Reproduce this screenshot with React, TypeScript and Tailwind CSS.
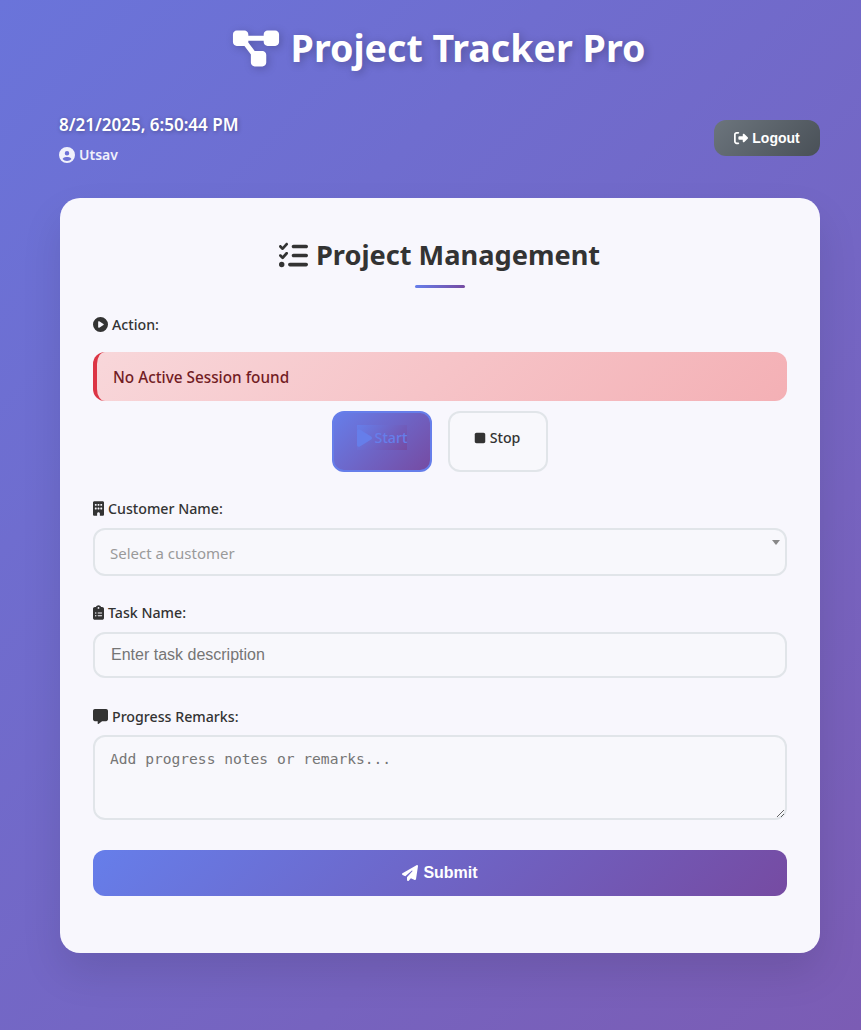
import React from 'react';
import {
  FaDiagramProject,
  FaCircleUser,
  FaRightFromBracket,
  FaListCheck,
  FaCirclePlay,
  FaPlay,
  FaStop,
  FaBuilding,
  FaClipboardList,
  FaMessage,
  FaPaperPlane,
} from 'react-icons/fa6';

const uiFont = "font-['Noto_Sans','Open_Sans',sans-serif]";

function FieldLabel({ icon, text }: { icon: React.ReactNode; text: string }) {
  return (
    <div className="flex h-[20px] items-center gap-[4px] text-[14.2px] font-medium text-[#333333]">
      {icon}
      <span className="pt-[1px]">{text}</span>
    </div>
  );
}

export default function App() {
  return (
    <div className={`${uiFont} min-h-[1030px] bg-[linear-gradient(135deg,#6a74da_0%,#7b5cb4_100%)] pt-[20px] pr-[41px] pl-[60px]`}>
      {/* header */}
      <h1 className="flex h-[56px] items-center justify-center gap-[10px] pr-[4px] text-[37.6px] font-bold text-white [text-shadow:2px_2px_8px_rgba(0,0,0,0.25)]">
        <FaDiagramProject className="h-[41px] w-[50px] drop-shadow-[2px_2px_4px_rgba(0,0,0,0.2)]" />
        <span>Project Tracker Pro</span>
      </h1>

      <div className="mt-[26px] flex h-[72px] items-center justify-between">
        <div className="-ml-[1px] text-white">
          <div className="text-[17px] leading-[26px] font-semibold [text-shadow:1px_1px_4px_rgba(0,0,0,0.3)]">
            8/21/2025, 6:50:44 PM
          </div>
          <div className="mt-[7px] flex items-center gap-[4px] text-[14px] leading-[20px] font-semibold text-white/90">
            <FaCircleUser className="h-[16px] w-[16px]" />
            <span>Utsav</span>
          </div>
        </div>
        <button className="flex h-[36px] w-[106px] items-center justify-center gap-[4px] rounded-[12px] bg-[linear-gradient(135deg,#6c757d,#495057)] font-['Liberation_Sans',sans-serif] text-[14px] font-bold text-white">
          <FaRightFromBracket className="h-[14px] w-[14px]" />
          <span>Logout</span>
        </button>
      </div>

      {/* card */}
      <div className="mt-[24px] h-[755px] rounded-[20px] bg-[#f8f7fd] px-[33px] pt-[37px] shadow-[0_20px_40px_rgba(0,0,0,0.1)]">
        <h2 className="flex h-[40px] items-center justify-center gap-[7px] pr-[2px] text-[27.2px] font-bold text-[#333333]">
          <FaListCheck className="h-[29px] w-[31px]" />
          <span className="pt-[1px]">Project Management</span>
        </h2>
        <div className="mx-auto mt-[10px] h-[3px] w-[50px] rounded-[2px] bg-[linear-gradient(90deg,#667eea,#764ba2)]" />

        <div className="mt-[26px]">
          <FieldLabel icon={<FaCirclePlay className="h-[15px] w-[15px]" />} text="Action:" />
        </div>

        <div className="mt-[18px] flex h-[49px] items-center rounded-[12px] border-l-[4px] border-[#dc3545] bg-[linear-gradient(135deg,#f8d7da,#f4b0b5)] pt-[1px] pl-[16px] text-[15.3px] font-medium text-[#721c24]">
          No Active Session found
        </div>

        <div className="mt-[10px] flex justify-center gap-[16px]">
          <button className="flex h-[61px] w-[100px] items-start justify-center rounded-[12px] border-2 border-[#667eea] bg-[linear-gradient(135deg,#667eea,#764ba2)] pt-[12px] text-[14.2px] font-medium text-[#667eea]">
            <span className="flex h-[25px] items-center gap-[3px] bg-[linear-gradient(135deg,#667eea,#764ba2)]">
              <FaPlay className="h-[20px] w-[15px]" />
              <span>Start</span>
            </span>
          </button>
          <button className="flex h-[61px] w-[100px] items-start justify-center rounded-[12px] border-2 border-[#e1e5e9] bg-[#f8f8fc] pt-[12px] pr-[2px] text-[14.2px] font-medium text-[#333333]">
            <span className="flex h-[25px] items-center gap-[4px]">
              <FaStop className="h-[14px] w-[12px]" />
              <span>Stop</span>
            </span>
          </button>
        </div>

        <div className="mt-[26px]">
          <FieldLabel icon={<FaBuilding className="h-[15px] w-[11px]" />} text="Customer Name:" />
        </div>
        <div className="relative mt-[10px] flex h-[48px] items-center rounded-[12px] border-2 border-[#e1e5e9] bg-[#f8f8fc] pt-[3px] pl-[15px] text-[15px] text-[#9a9a9a]">
          Select a customer
          <span className="absolute top-[10px] right-[5px] h-0 w-0 border-x-[4px] border-t-[5px] border-x-transparent border-t-[#888888]" />
        </div>

        <div className="mt-[26px]">
          <FieldLabel icon={<FaClipboardList className="h-[15px] w-[11px]" />} text="Task Name:" />
        </div>
        <input
          readOnly
          placeholder="Enter task description"
          className="mt-[10px] block h-[46px] w-full rounded-[12px] border-2 border-[#e1e5e9] bg-[#f8f8fc] pl-[16px] font-['Liberation_Sans',sans-serif] text-[16px] outline-none placeholder:text-[#757575]"
        />

        <div className="mt-[28px]">
          <FieldLabel icon={<FaMessage className="h-[15px] w-[15px]" />} text="Progress Remarks:" />
        </div>
        <textarea
          readOnly
          placeholder="Add progress notes or remarks..."
          className="mt-[9px] block h-[85px] w-full rounded-[12px] border-2 border-[#e1e5e9] bg-[#f8f8fc] px-[15px] pt-[11px] font-['DejaVu_Sans_Mono',monospace] text-[14.6px] outline-none placeholder:text-[#757575]"
        />

        <button className="mt-[30px] flex h-[46px] w-full items-center justify-center gap-[5px] rounded-[12px] bg-[linear-gradient(135deg,#667eea,#764ba2)] font-['Liberation_Sans',sans-serif] text-[16px] font-bold text-white">
          <FaPaperPlane className="h-[16px] w-[16px]" />
          <span>Submit</span>
        </button>
      </div>
    </div>
  );
}
